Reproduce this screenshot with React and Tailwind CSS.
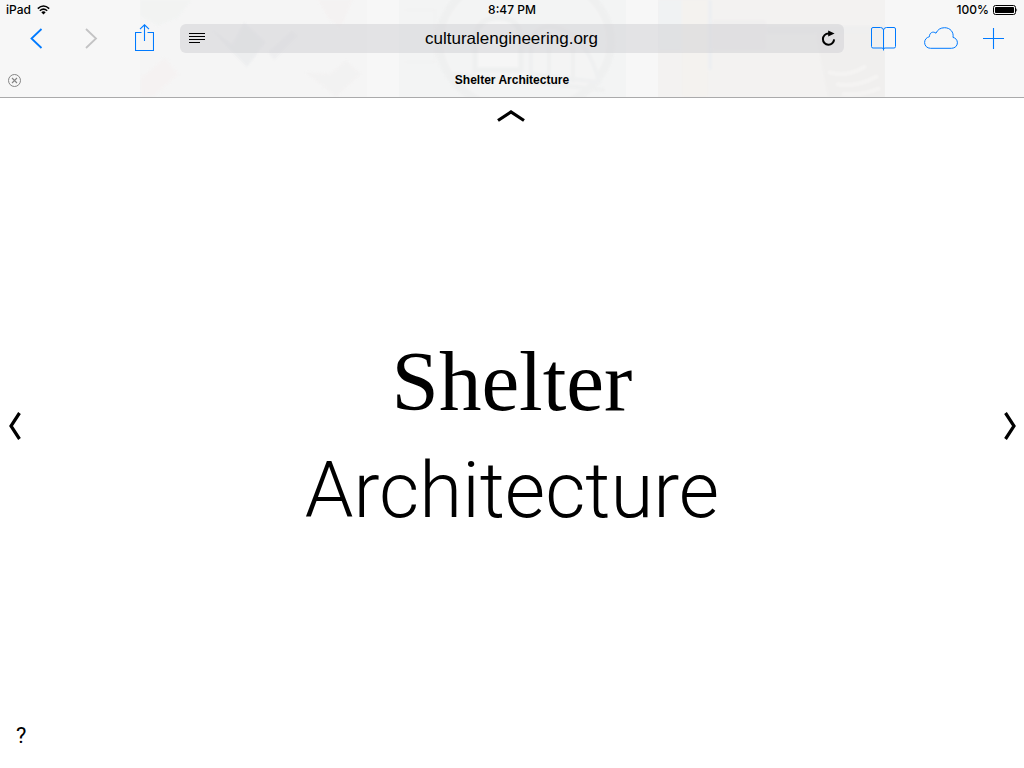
import React from "react";

function PageGhost() {
  return (
    <div aria-hidden="true" className="absolute inset-0 flex justify-center gap-8 overflow-hidden">
      <svg viewBox="0 0 227 97" preserveAspectRatio="none" className="h-full w-[227px] bg-[#f5f5f5]">
        <g className="opacity-75 blur-[1px]">
          <path d="M0 0H52L38 18 18 26 0 16Z" fill="#f1f3f2" />
          <path d="M70 28 92 44 104 22 126 42 107 67 86 46Z" fill="#ebecee" />
          <path d="M128 52 152 30 158 36 134 60Z" fill="#ededef" />
          <path d="M178 0H213L200 28 188 18Z" fill="#f4f1f1" />
          <path d="M0 78 25 57 39 74 14 97H0Z" fill="#f5f2f2" />
          <path d="M165 72 190 74 206 60 221 74 196 97Z" fill="#f2f1f1" />
        </g>
      </svg>
      <svg viewBox="0 0 227 97" preserveAspectRatio="none" className="h-full w-[227px] bg-[#f3f4f4]">
        <g className="opacity-75 blur-[1px]">
          <ellipse cx="126" cy="42" rx="86" ry="70" fill="#f4f4f4" stroke="#eeefef" strokeWidth="8" />
          <path d="M76 70V38Q78 18 100 18Q120 18 122 38V70Z" fill="#f7f7f7" stroke="#eeefef" strokeWidth="5" />
          <path d="M132 74V40Q142 20 164 30Q190 42 200 82Z" fill="#f5f5f5" stroke="#eeeff0" strokeWidth="4" />
          <path d="M150 32V78M174 40V82M52 74 206 90" fill="none" stroke="#eeefef" strokeWidth="4" />
          <path d="M6 10H36V62H6" fill="none" stroke="#f1f1f1" strokeWidth="2" />
        </g>
      </svg>
      <svg viewBox="0 0 227 97" preserveAspectRatio="none" className="h-full w-[227px] bg-[#f3f2f1]">
        <g className="opacity-75 blur-[1px]">
          <path d="M0 0H24V50H0Z" fill="#f0f2f4" />
          <path d="M24 0H50V97H24Z" fill="#f5f2ef" />
          <path d="M50 0H54V70H50Z" fill="#eceff2" />
          <path d="M54 20H108V50H54Z" fill="#f0eeef" />
          <path d="M108 26H227V34H108Z" fill="#eeeeef" />
          <path d="M158 34H227V97H170Z" fill="#efeeed" />
          <path d="M170 72Q190 78 208 66M178 84Q198 88 220 76M184 94Q204 96 222 88" fill="none" stroke="#f6f5f4" strokeWidth="4" />
        </g>
      </svg>
    </div>
  );
}

function StatusBar() {
  return (
    <div className="grid h-5 grid-cols-3 items-center px-[6px] font-['Inter',sans-serif] text-[12px] leading-5 font-medium text-black">
      <div className="flex items-center gap-[6px]">
        <span>iPad</span>
        <svg width="13" height="10" viewBox="0 0 13 10" aria-label="Wi-Fi" role="img">
          <path d="M0.8 3.6Q6.5-1.6 12.2 3.6" fill="none" stroke="#000" strokeWidth="1.6" />
          <path d="M2.8 5.8Q6.5 2.4 10.2 5.8" fill="none" stroke="#000" strokeWidth="1.5" />
          <path d="M4.3 7.2Q6.5 5.4 8.7 7.2L6.5 9.6Z" />
        </svg>
      </div>
      <div className="text-center">8:47 PM</div>
      <div className="flex items-center justify-end gap-1">
        <span>100%</span>
        <svg width="25" height="10" viewBox="0 0 25 10" aria-label="Battery" role="img">
          <rect x="0.5" y="0.5" width="22" height="9" rx="2" fill="none" stroke="#000" />
          <rect x="2" y="2" width="19" height="6" rx="0.8" />
          <path d="M23.4 3.2Q25 5 23.4 6.8Z" />
        </svg>
      </div>
    </div>
  );
}

function Toolbar() {
  return (
    <nav aria-label="Browser" className="flex h-[37px] items-center pr-5 pl-[30px] text-[#007aff]">
      <button type="button" aria-label="Back">
        <svg width="13" height="21" viewBox="0 0 13 21" className="block">
          <path d="M11.5 1 1.5 10.5 11.5 20" fill="none" stroke="currentColor" strokeWidth="1.8" />
        </svg>
      </button>
      <button type="button" aria-label="Forward" className="ml-[42px] text-[#c3c3c4]">
        <svg width="13" height="21" viewBox="0 0 13 21" className="block">
          <path d="M1 1 11 10.5 1 20" fill="none" stroke="currentColor" strokeWidth="1.8" />
        </svg>
      </button>
      <button type="button" aria-label="Share" className="ml-[37px]">
        <svg width="19" height="29" viewBox="0 0 19 29" className="block">
          <path d="M6.5 8.5H0.5V26.5H18.5V8.5H12.5M9.5 17V0.8M5 5.2 9.5 0.8 14 5.2" fill="none" stroke="currentColor" strokeWidth="1.1" />
        </svg>
      </button>
      <div className="ml-[26px] flex h-[29px] min-w-0 flex-1 items-center rounded-md bg-[#cfd0d4]/50 pr-2 pl-[9px] text-black">
        <button type="button" aria-label="Reader">
          <svg width="16" height="11" viewBox="0 0 16 11" className="block" shapeRendering="crispEdges">
            <path d="M0 0.5H16M0 3.5H16M0 6.5H16M0 9.5H11" stroke="#000" />
          </svg>
        </button>
        <input
          aria-label="Address"
          defaultValue="culturalengineering.org"
          className="min-w-0 flex-1 bg-transparent pr-[3px] text-center text-[17px] leading-6 outline-none"
        />
        <button type="button" aria-label="Reload">
          <svg width="15" height="17" viewBox="0 0 15 17" className="block">
            <path d="M8.500 3.500H7.500A5.600 5.600 0 1 0 13.100 9.400" fill="none" stroke="#000" strokeWidth="2" />
            <path d="M7.200 0.400 13.600 3.500 7.200 6.600Z" />
          </svg>
        </button>
      </div>
      <button type="button" aria-label="Bookmarks" className="ml-[27px]">
        <svg width="25" height="24" viewBox="0 0 25 24" className="block">
          <path d="M12.5 23.5V3Q12 0.5 9.5 0.5H2Q0.5 0.5 0.5 2V19.5Q0.5 21 2 21H11Q12.5 21 12.5 22.5Q12.5 21 14 21H23Q24.5 21 24.5 19.5V2Q24.5 0.5 23 0.5H15.5Q13 0.5 12.5 3" fill="none" stroke="currentColor" />
        </svg>
      </button>
      <button type="button" aria-label="iCloud tabs" className="ml-7">
        <svg width="34" height="23" viewBox="0 0 34 23" className="block">
          <path d="M6.5 21.3H27.5C31 21.3 33.4 18.8 33.4 15.8C33.4 12.9 31.5 10.9 29 10.4C30 5.200 26.2 0.7 20.6 0.7C16.5 0.7 13.5 2.7 12 6.200C9 3.8 5.3 5.800 5.500 9.600C2.500 10.500 0.600 12.500 0.600 15.500C0.600 18.700 3 21.300 6.500 21.300Z" fill="none" stroke="currentColor" />
        </svg>
      </button>
      <button type="button" aria-label="New tab" className="ml-[25px]">
        <svg width="21" height="21" viewBox="0 0 21 21" className="block">
          <path d="M10.5 0V21M0 10.5H21" stroke="currentColor" strokeWidth="1.1" />
        </svg>
      </button>
    </nav>
  );
}

function TabBar() {
  return (
    <div className="flex h-10 items-center px-2 pt-[6px]">
      <button type="button" aria-label="Close tab" className="w-4">
        <svg width="13" height="13" viewBox="0 0 13 13" className="block">
          <circle cx="6.5" cy="6.5" r="6" fill="none" stroke="#858585" />
          <path d="M4 4 9 9M9 4 4 9" stroke="#858585" strokeWidth="1.1" />
        </svg>
      </button>
      <div className="flex-1 text-center text-[12px] leading-4 font-bold text-black">Shelter Architecture</div>
      <div className="w-4" />
    </div>
  );
}

export default function App() {
  return (
    <div className="flex min-h-screen flex-col bg-white font-['Liberation_Sans',sans-serif] text-black">
      <header className="relative border-b border-[#aaaaab] bg-[#f7f7f7]">
        <PageGhost />
        <div className="relative">
          <StatusBar />
          <Toolbar />
          <TabBar />
        </div>
      </header>
      <main className="flex flex-1 flex-col">
        <div className="flex h-9 items-center justify-center pr-[3px]">
          <button type="button" aria-label="Up">
            <svg width="28" height="12" viewBox="0 0 28 12" className="block">
              <path d="M1 10.5 14 2 27 10.5" fill="none" stroke="#000" strokeWidth="3.200" />
            </svg>
          </button>
        </div>
        <div className="flex flex-1 items-center justify-between px-2">
          <button type="button" aria-label="Previous">
            <svg width="13" height="28" viewBox="0 0 13 28" className="block">
              <path d="M11.500 1 3 14 11.500 27" fill="none" stroke="#000" strokeWidth="3.200" />
            </svg>
          </button>
          <h1 className="pt-[22px] text-center">
            <span className="block font-['Liberation_Serif',serif] text-[85px] leading-[107px]">Shelter</span>
            <span className="block font-['Roboto',sans-serif] text-[78px] leading-[112px] font-light">Architecture</span>
          </h1>
          <button type="button" aria-label="Next">
            <svg width="13" height="28" viewBox="0 0 13 28" className="block">
              <path d="M2.500 1 11 14 2.500 27" fill="none" stroke="#000" strokeWidth="3.200" />
            </svg>
          </button>
        </div>
        <div className="flex h-[50px] items-start px-4 pt-1">
          <button type="button" aria-label="Help" className="font-['Roboto',sans-serif] text-[22px] leading-7">?</button>
        </div>
      </main>
    </div>
  );
}
